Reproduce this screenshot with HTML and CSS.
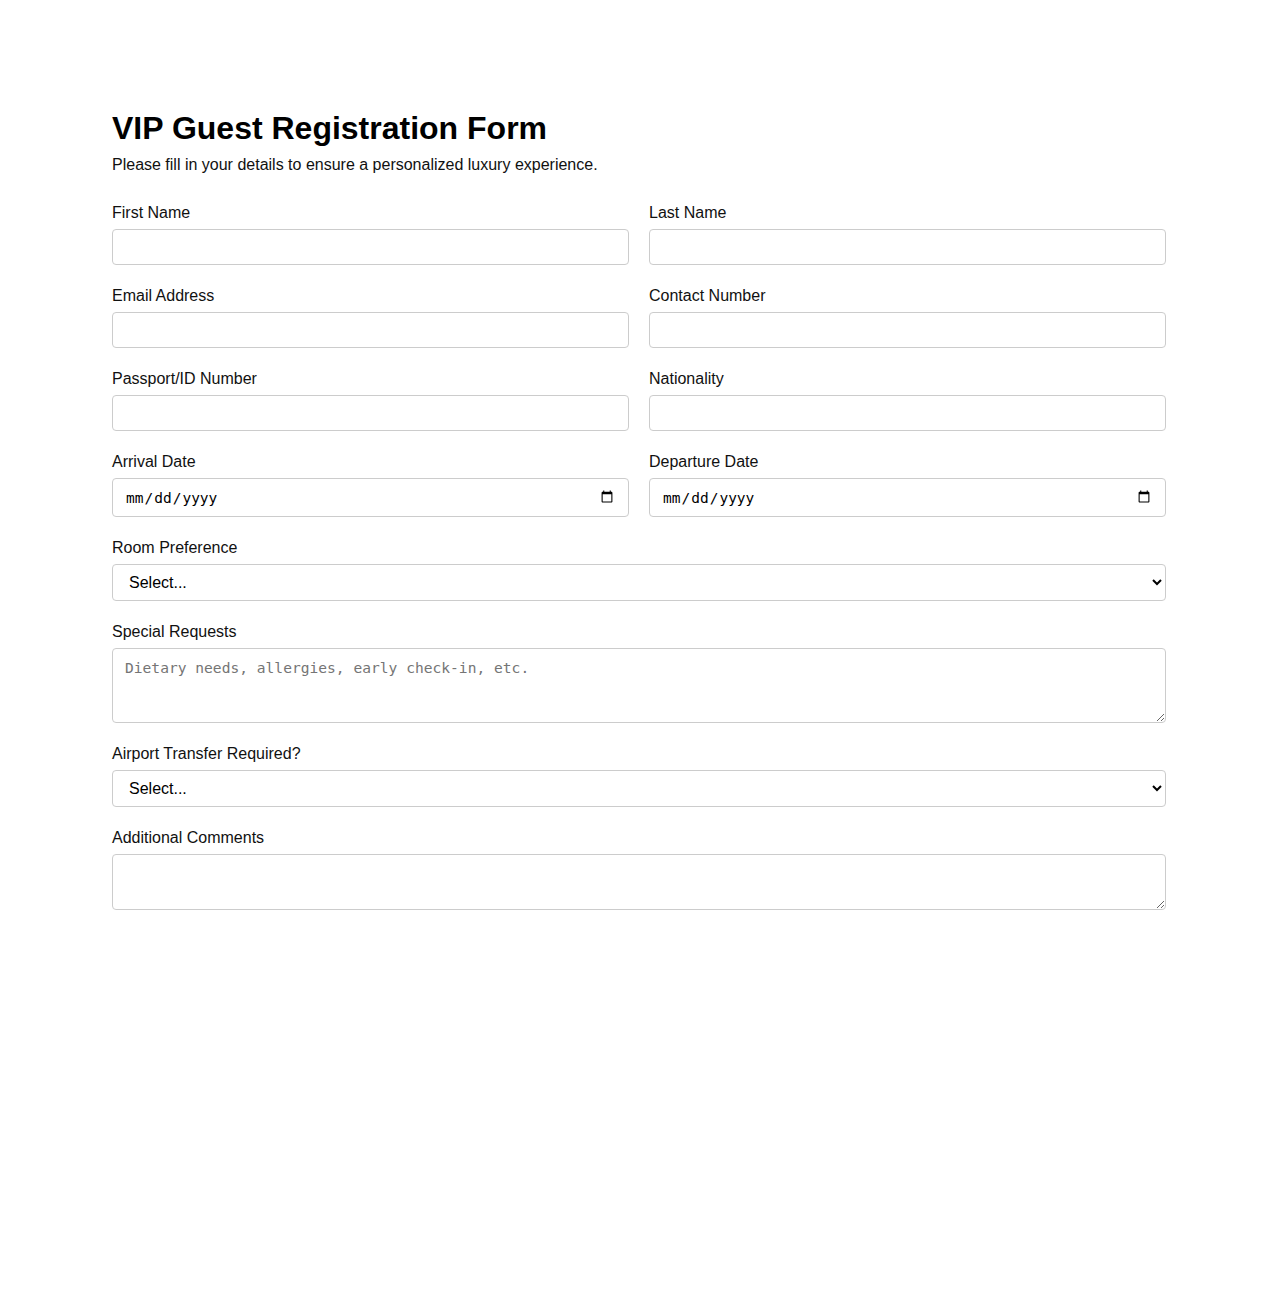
FILE: index.html
```html
<!DOCTYPE html>
<html lang="en">
<head>
  <meta charset="UTF-8" />
  <title>VIP Guest Registration Form</title>
  <link rel="stylesheet" href="styles.css">
</head>
<body>
  <div class="container">
    <h1>VIP Guest Registration Form</h1>
    <p class="intro">Please fill in your details to ensure a personalized luxury experience.</p>

    <form class="form-grid">
      <div class="field">
        <label for="firstName">First Name</label>
        <input type="text" id="firstName" />
      </div>
      <div class="field">
        <label for="lastName">Last Name</label>
        <input type="text" id="lastName" />
      </div>
      <div class="field">
        <label for="email">Email Address</label>
        <input type="email" id="email" />
      </div>
      <div class="field">
        <label for="phone">Contact Number</label>
        <input type="tel" id="phone" />
      </div>
      <div class="field">
        <label for="passport">Passport/ID Number</label>
        <input type="text" id="passport" />
      </div>
      <div class="field">
        <label for="nationality">Nationality</label>
        <input type="text" id="nationality" />
      </div>
      <div class="field">
        <label for="arrival">Arrival Date</label>
        <input type="date" id="arrival" class="date" />
      </div>
      <div class="field">
        <label for="departure">Departure Date</label>
        <input type="date" id="departure" class="date" />
      </div>
      <div class="field full">
        <label for="room">Room Preference</label>
        <select id="room">
          <option>Select...</option>
          <option>Deluxe Suite</option>
          <option>Presidential Suite</option>
          <option>Ocean View Villa</option>
        </select>
      </div>
      <div class="field full">
        <label for="requests">Special Requests</label>
        <textarea id="requests" class="tall" placeholder="Dietary needs, allergies, early check-in, etc."></textarea>
      </div>
      <div class="field full">
        <label for="transfer">Airport Transfer Required?</label>
        <select id="transfer">
          <option>Select...</option>
          <option>Yes</option>
          <option>No</option>
        </select>
      </div>
      <div class="field full">
        <label for="comments">Additional Comments</label>
        <textarea id="comments" class="short"></textarea>
      </div>
    </form>
  </div>
</body>
</html>
```

FILE: styles.css
```css
body {
  margin: 0;
  font-family: "Liberation Sans", Arial, sans-serif;
  color: #000;
  background: #fff;
}

.container {
  max-width: 1054px;
  margin: 0 auto;
  padding-top: 110px;
}

h1 {
  font-size: 32px;
  line-height: 37px;
  margin: 0 0 9px;
}

.intro {
  font-size: 16px;
  line-height: 18px;
  margin: 0 0 29px;
  color: #111;
}

.form-grid {
  display: grid;
  grid-template-columns: 1fr 1fr;
  column-gap: 20px;
  row-gap: 21px;
}

.field { min-width: 0; }
.full { grid-column: span 2; }

label {
  display: block;
  font-size: 16px;
  line-height: 18px;
  padding-top: 1px;
  margin-bottom: 7px;
  color: #111;
}

input, select, textarea {
  display: block;
  width: 100%;
  box-sizing: border-box;
  margin: 0;
  padding: 10px 12px;
  border: 1px solid #ccc;
  border-radius: 4px;
  background: #fff;
  height: 36px;
}

.date {
  height: 39px;
  font-family: "DejaVu Sans Mono", "Liberation Mono", monospace;
  font-size: 14.5px;
  color: #000;
}

select {
  height: 37px;
  padding: 0 8px 0 12px;
  font-family: "Liberation Sans", Arial, sans-serif;
  font-size: 16px;
  color: #000;
}

textarea {
  font-family: "DejaVu Sans Mono", "Liberation Mono", monospace;
  font-size: 14.6px;
  resize: vertical;
}

textarea::placeholder { color: #757575; }

.tall { height: 75px; }
.short { height: 56px; }
```
